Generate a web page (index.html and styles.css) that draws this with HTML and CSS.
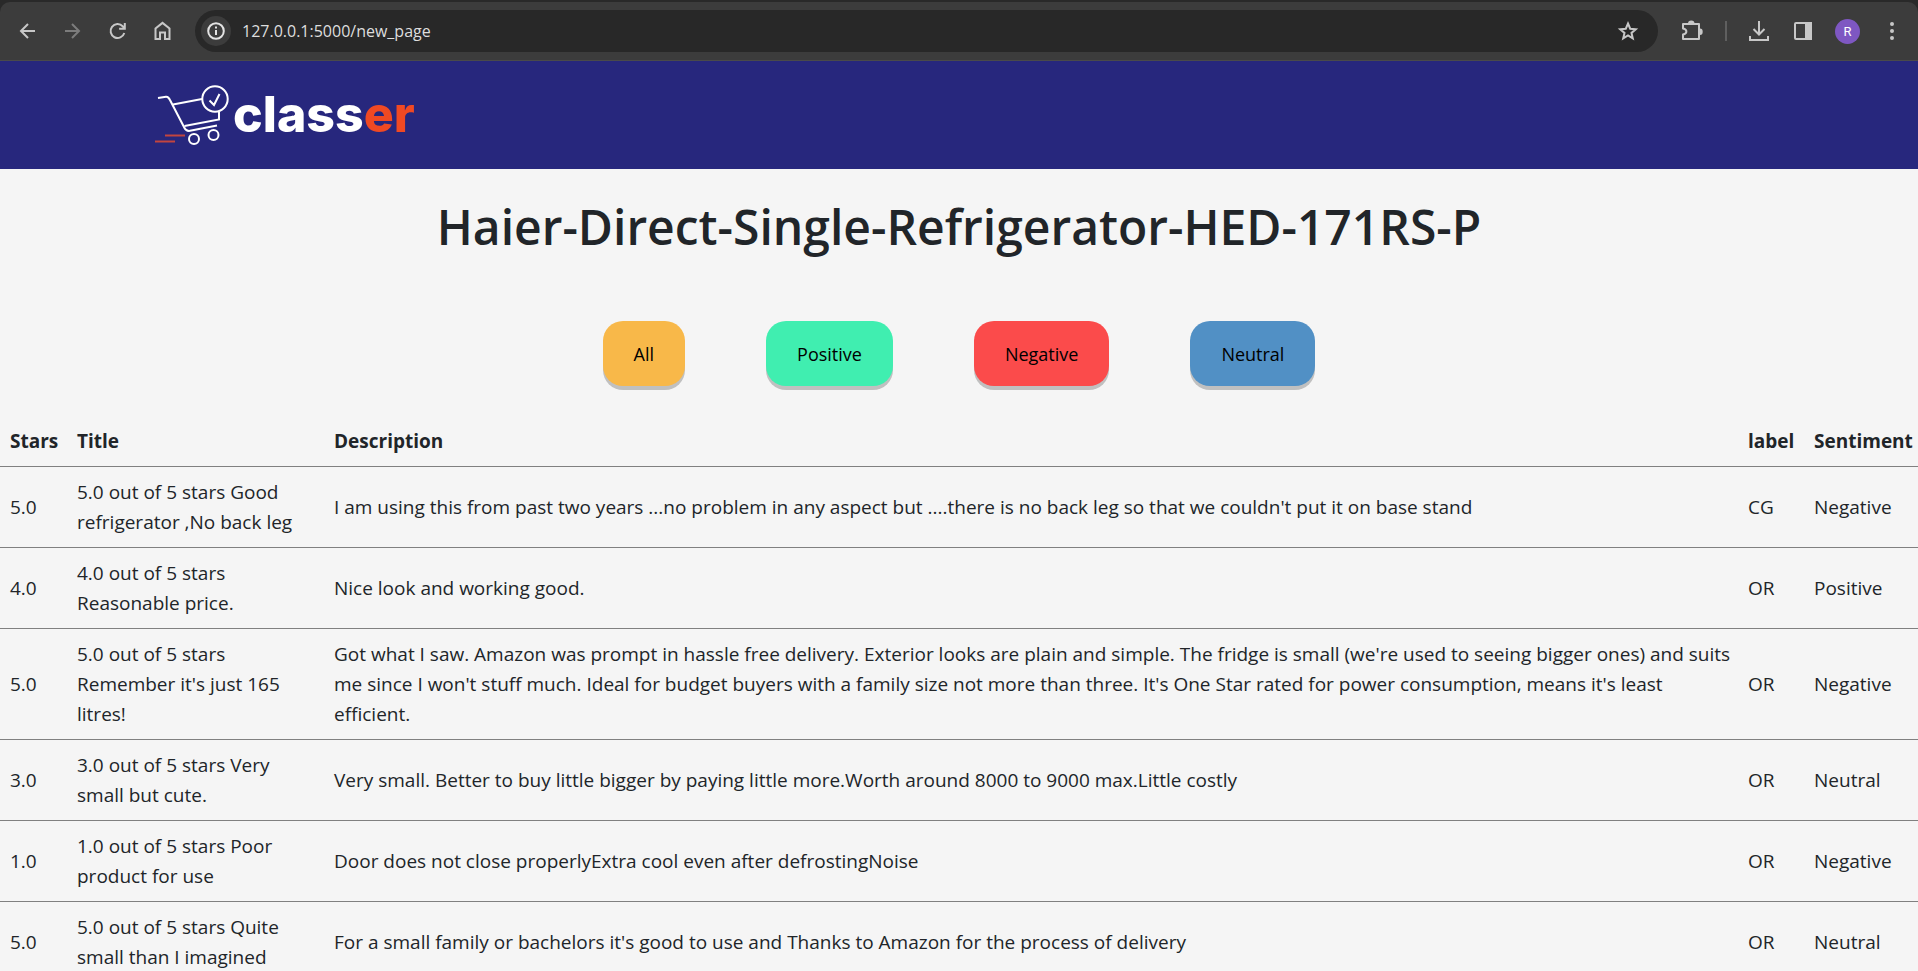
FILE: index.html
```html
<!DOCTYPE html>
<html lang="en">
<head>
<meta charset="utf-8">
<title>Classer</title>
<link rel="stylesheet" href="styles.css">
</head>
<body>
<header class="browser">
  <div class="toolbar">
    <div class="nav-buttons">
      <button class="tool" aria-label="Back"><svg width="24" height="24" viewBox="0 0 24 24"><path d="M19 12H5.500M12 5l-7 7 7 7"/></svg></button>
      <button class="tool dim" aria-label="Forward"><svg width="24" height="24" viewBox="0 0 24 24"><path d="M4 12h13.500M11 5l7 7-7 7"/></svg></button>
      <button class="tool" aria-label="Reload"><svg width="24" height="24" viewBox="0 0 24 24"><path d="M18.300 14a7 7 0 1 1-1.600-6.800L18.500 9M18.800 4v5.700h-5.700"/></svg></button>
      <button class="tool" aria-label="Home"><svg width="24" height="24" viewBox="0 0 24 24"><path d="M4.500 20V9.500l7-5.600 7 5.600V20H14v-6.500H9V20z"/></svg></button>
    </div>
    <div class="address">
      <button class="info" aria-label="Site information"><svg width="22" height="22" viewBox="0 0 22 22"><circle cx="11" cy="11" r="7.800"/><path d="M11 10v5M11 6.500v2"/></svg></button>
      <input class="url" type="text" aria-label="Address" value="127.0.0.1:5000/new_page">
      <button class="tool" aria-label="Bookmark"><svg width="24" height="24" viewBox="0 0 24 24"><path d="M12 4.500l2.200 5.200 5.600.5-4.300 3.700 1.300 5.500-4.800-2.900-4.800 2.900 1.300-5.500-4.300-3.700 5.600-.5z"/></svg></button>
    </div>
    <div class="actions">
      <button class="tool" aria-label="Extensions"><svg width="26" height="26" viewBox="0 0 26 26"><path d="M4 6h16v15H4v-4.500c4.500-1 4.500-5 0-6z" stroke-linejoin="round"/><path class="solid" d="M10 5.500a2 1.700 0 0 1 4.500 0zM21 11.500a1.700 2.200 0 0 1 0 4.400z"/></svg></button>
      <span class="divider"></span>
      <button class="tool" aria-label="Downloads"><svg width="24" height="24" viewBox="0 0 24 24"><path d="M12 2v13M6.500 10l5.500 5.500L17.500 10M3 17v4h18v-4"/></svg></button>
      <button class="tool" aria-label="Side panel"><svg width="24" height="24" viewBox="0 0 24 24"><rect x="4" y="4" width="16" height="16" rx="1"/><path class="solid" d="M15 4h5v16h-5z"/></svg></button>
      <button class="avatar" aria-label="Profile">R</button>
      <button class="tool" aria-label="Menu"><svg width="24" height="24" viewBox="0 0 24 24"><g class="solid"><circle cx="12" cy="5" r="1"/><circle cx="12" cy="12" r="1"/><circle cx="12" cy="19" r="1"/></g></svg></button>
    </div>
  </div>
</header>
<nav class="navbar">
  <a class="brand" href="#">
    <svg class="cart" width="76" height="62" viewBox="0 0 76 62" aria-hidden="true">
      <path d="M3 14l8-1.300q2.500-.2 4 3.300L29 43q2 4.500 6 3.800l27-5.300"/>
      <path d="M18 20.500L47 15M64 28v7.500L29.500 42"/>
      <circle cx="60" cy="15" r="12.700"/>
      <path d="M54.500 16.500l4.500 4.500 5.500-11"/>
      <circle cx="39" cy="55" r="5"/><circle cx="58.500" cy="51" r="5"/>
      <path class="speed" d="M10 51.500h20M0 57.500h20"/>
    </svg>
    <span class="brand-name">class<span class="accent">er</span></span>
  </a>
</nav>
<main class="content">
  <h1 class="product">Haier-Direct-Single-Refrigerator-HED-171RS-P</h1>
  <div class="filters">
    <button class="filter all">All</button>
    <button class="filter positive">Positive</button>
    <button class="filter negative">Negative</button>
    <button class="filter neutral">Neutral</button>
  </div>
  <table class="reviews">
    <colgroup><col class="col-stars"><col class="col-title"><col><col class="col-label"><col class="col-sentiment"></colgroup>
    <thead><tr><th>Stars</th><th>Title</th><th>Description</th><th>label</th><th>Sentiment</th></tr></thead>
    <tbody>
      <tr><td>5.0</td><td>5.0 out of 5 stars Good refrigerator ,No back leg</td><td class="description">I am using this from past two years ...no problem in any aspect but ....there is no back leg so that we couldn't put it on base stand</td><td>CG</td><td>Negative</td></tr>
      <tr><td>4.0</td><td>4.0 out of 5 stars Reasonable price.</td><td class="description">Nice look and working good.</td><td>OR</td><td>Positive</td></tr>
      <tr><td>5.0</td><td>5.0 out of 5 stars Remember it's just 165 litres!</td><td class="description">Got what I saw. Amazon was prompt in hassle free delivery. Exterior looks are plain and simple. The fridge is small (we're used to seeing bigger ones) and suits me since I won't stuff much. Ideal for budget buyers with a family size not more than three. It's One Star rated for power consumption, means it's least<br>efficient.</td><td>OR</td><td>Negative</td></tr>
      <tr><td>3.0</td><td>3.0 out of 5 stars Very small but cute.</td><td class="description">Very small. Better to buy little bigger by paying little more.Worth around 8000 to 9000 max.Little costly</td><td>OR</td><td>Neutral</td></tr>
      <tr><td>1.0</td><td>1.0 out of 5 stars Poor product for use</td><td class="description">Door does not close properlyExtra cool even after defrostingNoise</td><td>OR</td><td>Negative</td></tr>
      <tr><td>5.0</td><td>5.0 out of 5 stars Quite small than I imagined</td><td class="description">For a small family or bachelors it's good to use and Thanks to Amazon for the process of delivery</td><td>OR</td><td>Neutral</td></tr>
    </tbody>
  </table>
</main>
</body>
</html>
```
FILE: styles.css
```css
* { box-sizing: border-box; }

body {
  margin: 0;
  height: 100vh;
  overflow: hidden;
  display: flex;
  flex-direction: column;
  background: #f5f5f5;
  color: #212529;
  font-family: "Segoe UI", "Open Sans", sans-serif;
  font-size: 19px;
  line-height: 30px;
}

button { padding: 0; border: 0; background: none; font: inherit; }

svg { display: block; fill: none; stroke: currentColor; stroke-width: 2; }
.solid { fill: currentColor; }

.browser {
  flex: none;
  padding-top: 2px;
  background: #292929;
}

.toolbar {
  display: flex;
  align-items: center;
  height: 59px;
  padding: 0 14px 0 16px;
  border-bottom: 1px solid #4a4a4a;
  border-radius: 10px 10px 0 0;
  background: #3c3c3c;
  color: #c7c7c7;
}

.nav-buttons { display: flex; gap: 21px; margin-right: 20px; }
.tool { color: inherit; }
.dim { color: #7c7c7c; }

.address {
  flex: 1;
  display: flex;
  align-items: center;
  height: 42px;
  padding: 0 18px 0 6px;
  border-radius: 21px;
  background: #282828;
}

.info {
  display: flex;
  align-items: center;
  justify-content: center;
  width: 30px;
  height: 30px;
  border-radius: 50%;
  background: #3c3c3c;
  color: #e3e3e3;
}

.url {
  flex: 1;
  min-width: 0;
  margin-left: 11px;
  padding: 0;
  border: 0;
  background: none;
  color: #dedede;
  font: inherit;
  font-size: 16px;
}

.actions { display: flex; align-items: center; gap: 20px; margin-left: 21px; }
.divider { width: 2px; height: 20px; background: #5f5f5f; }

.avatar {
  width: 25px;
  height: 25px;
  border-radius: 50%;
  background: #7e57c2;
  color: #fff;
  font: 13px/25px Roboto, sans-serif;
}

.navbar {
  flex: none;
  display: flex;
  align-items: center;
  height: 108px;
  padding: 0 155px;
  background: #27277d;
}

.brand {
  display: flex;
  align-items: center;
  gap: 2px;
  color: #fff;
  text-decoration: none;
}

.speed { stroke: #c2453f; }
.brand-name { padding-bottom: 3px; font: 800 50px/56px Inter, sans-serif; }
.accent { color: #f04923; }

.content { flex: 1; min-height: 0; overflow: hidden; }

.product {
  margin: 28px 0 0;
  text-align: center;
  font-size: 48px;
  font-weight: 600;
  line-height: 60px;
}

.filters {
  display: flex;
  justify-content: center;
  gap: 81px;
  margin: 64px 0 30px;
}

.filter {
  height: 65px;
  padding: 0 31px;
  border-radius: 20px;
  box-shadow: 0 4px 0 #c0c0c0;
  color: #000;
  font-size: 18px;
}

.all { background: #f8b849; }
.positive { background: #40eeb0; }
.negative { background: #fb4b4b; }
.neutral { background: #5190c5; }

.reviews {
  width: 100%;
  table-layout: fixed;
  border-collapse: collapse;
}

.col-stars { width: 67px; }
.col-title { width: 257px; }
.col-label { width: 66px; }
.col-sentiment { width: 114px; }

th, td {
  padding: 10px;
  border-bottom: 1px solid #808080;
  text-align: left;
  vertical-align: middle;
}

th { white-space: nowrap; }
.description { padding-right: 0; }
```
